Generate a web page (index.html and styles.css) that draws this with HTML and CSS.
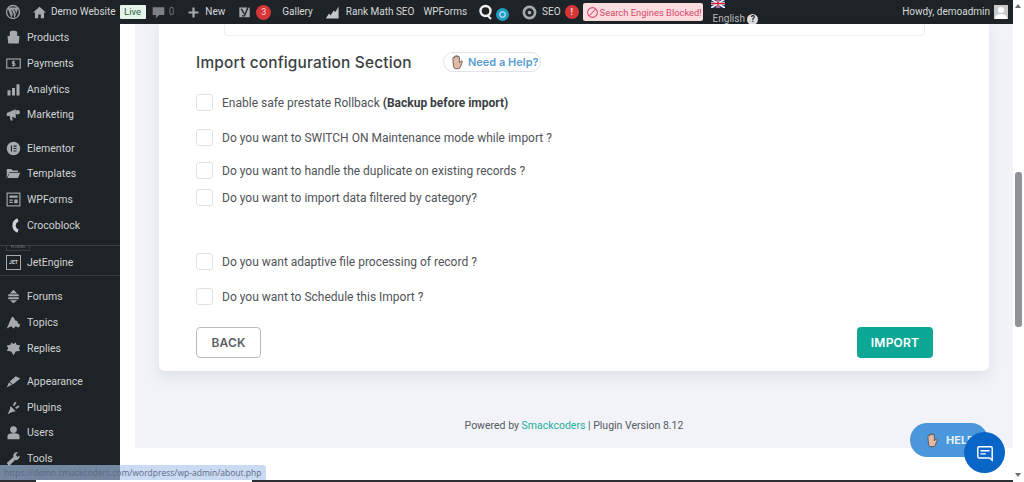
FILE: index.html
```html
<!DOCTYPE html>
<html lang="en">
<head>
  <meta charset="UTF-8" />
  <title>Import configuration</title>
  <link rel="stylesheet" href="styles.css">
</head>
<body>
  <div class="page">
    <header class="adminbar">
      <svg class="bar-icon wp" viewBox="0 0 20 20"><circle cx="10" cy="10" r="9" fill="#9b9ea1"/><circle cx="10" cy="10" r="7.300" fill="#1d2327"/><path d="M3.500 4.500h13c.5 2-1 3-1.500 5l-3 8-2-5.500-2 5.500-3-8c-1-2-1.500-3-1.500-5z" fill="#9b9ea1"/><path d="M8.300 7.500 10.800 14M11.500 6.500 14 13" stroke="#1d2327" stroke-width="1"/></svg>
      <svg class="bar-icon home" viewBox="0 0 20 20"><path d="M10 1 0 10h3v9h5v-6h4v6h5v-9h3z" fill="#a7aaad"/></svg>
      <span class="bar-text site">Demo Website</span>
      <span class="live">Live</span>
      <svg class="bar-icon comment" viewBox="0 0 20 20"><path d="M1 2h18v12h-8l-5 5v-5H1z" fill="#7d8185"/></svg>
      <span class="bar-text muted count">0</span>
      <svg class="bar-icon plus" viewBox="0 0 20 20"><path d="M8 1h4v7h7v4h-7v7H8v-7H1V8h7z" fill="#a7aaad"/></svg>
      <span class="bar-text new">New</span>
      <svg class="bar-icon yoast" viewBox="0 0 20 20"><path d="M2 3h16v15H2z" fill="#a7aaad"/><path d="M5 5l4.500 8M16 1l-6 15H6" fill="none" stroke="#1d2327" stroke-width="2.200"/></svg>
      <span class="badge">3</span>
      <span class="bar-text gallery">Gallery</span>
      <svg class="bar-icon rank" viewBox="0 0 20 20"><path d="M1 18l4-6 2 2 4-6 2 2 4-7v15z" fill="#c3c4c7"/></svg>
      <span class="bar-text rankmath">Rank Math SEO</span>
      <span class="bar-text wpforms">WPForms</span>
      <svg class="bar-icon quiz" viewBox="0 0 14 16"><circle cx="6.500" cy="7" r="5" fill="none" stroke="#f0f0f1" stroke-width="2.400"/><path d="M8 11l4 4" stroke="#f0f0f1" stroke-width="2"/></svg>
      <span class="gear-dot"></span>
      <svg class="bar-icon seo" viewBox="0 0 20 20"><circle cx="10" cy="10" r="7.500" fill="none" stroke="#a7aaad" stroke-width="3.500"/><circle cx="10" cy="10" r="2.500" fill="#a7aaad"/></svg>
      <span class="bar-text seo-text">SEO</span>
      <span class="badge alert">!</span>
      <span class="blocked">
        <svg viewBox="0 0 20 20"><circle cx="10" cy="10" r="7.500" fill="none" stroke="#e0476c" stroke-width="1.600"/><path d="M5 15 15 5" stroke="#e0476c" stroke-width="1.600"/></svg>
        Search Engines Blocked!
      </span>
      <span class="lang">
        <svg class="flag" viewBox="0 0 14 9"><rect width="14" height="9" fill="#2b3f86"/><path d="M0 0l14 9M14 0 0 9" stroke="#fff" stroke-width="1.500"/><path d="M7 0v9M0 4.500h14" stroke="#fff" stroke-width="2.600"/><path d="M7 0v9M0 4.500h14" stroke="#cf2233" stroke-width="1.400"/></svg>
        <span class="lang-row">English <i class="q">?</i></span>
      </span>
      <span class="bar-text howdy">Howdy, demoadmin</span>
      <span class="avatar"><svg viewBox="0 0 14 14"><circle cx="7" cy="5" r="3" fill="#fff"/><path d="M1 14c0-4 3-5 6-5s6 1 6 5z" fill="#fff"/></svg></span>
    </header>

    <div class="layout">
      <nav class="sidebar">
        <ul class="menu">
          <li><svg viewBox="0 0 20 20"><path d="M2 8h16l-1 10H3zM5 8V4a3 3 0 0 1 3-3h4a3 3 0 0 1 3 3v4z" fill="#a7aaad"/></svg>Products</li>
          <li><svg viewBox="0 0 20 20"><rect x="1" y="4" width="18" height="12" fill="none" stroke="#a7aaad" stroke-width="1.500"/><path d="M12 7.500H8.500v2.500H12v2.500H8M10 6v8" fill="none" stroke="#a7aaad" stroke-width="1.300"/></svg>Payments</li>
          <li><svg viewBox="0 0 20 20"><path d="M2 11h4v7H2zM8 8h4v10H8zM14 3h4v15h-4z" fill="#a7aaad"/></svg>Analytics</li>
          <li><svg viewBox="0 0 20 20"><path d="M1 8l12-5v12L8 13l1 5H6l-1-6H1z" fill="#a7aaad"/><circle cx="15.500" cy="7" r="3" fill="#a7aaad"/></svg>Marketing</li>
        </ul>
        <ul class="menu">
          <li><svg viewBox="0 0 20 20"><circle cx="10" cy="10" r="9" fill="#a7aaad"/><path d="M6.500 6v8H8V6zM10 6h4v1.500h-4zM10 9.300h4v1.500h-4zM10 12.500h4V14h-4z" fill="#1d2327"/></svg>Elementor</li>
          <li><svg viewBox="0 0 20 20"><path d="M1 4h6l2 2h7v2H5l-4 8zM5 9h14l-3 7H2z" fill="#a7aaad"/></svg>Templates</li>
          <li><svg viewBox="0 0 20 20"><rect x="1.500" y="1.500" width="17" height="17" fill="none" stroke="#a7aaad" stroke-width="1.500"/><path d="M4.500 4.500h11v3h-11zM4.500 10h4.500v1.500H4.500zM4.500 13h4.500v1.500H4.500zM11 10h4.500v5H11z" fill="#a7aaad"/></svg>WPForms</li>
          <li><svg viewBox="0 0 20 20"><path d="M16 2.500a8 8 0 0 0 0 15" fill="none" stroke="#d0d2d3" stroke-width="4.500"/></svg>Crocoblock</li>
        </ul>
        <div class="plugin-rule"><span>PLUGINS</span></div>
        <ul class="menu">
          <li class="jet"><span class="jet-box">JET</span>JetEngine</li>
        </ul>
        <ul class="menu rule-top">
          <li><svg viewBox="0 0 20 20"><path d="M10 1l5 5H5zM3 7h14v2.500H3zM3 11h14v2.500H3zM5 15h10l-5 4z" fill="#a7aaad"/></svg>Forums</li>
          <li><svg viewBox="0 0 20 20"><path d="M1 18 8 2l3 2 1 3 3 1 1 3 3 2-2 4-4-2-3 3-3-3z" fill="#a7aaad"/></svg>Topics</li>
          <li><svg viewBox="0 0 20 20"><path d="M7 2l3 2 3-2 1 3 5 1-2 4 2 3-6 1-3 5-3-5-6-1 2-3-2-4 5-1z" fill="#a7aaad"/></svg>Replies</li>
        </ul>
        <ul class="menu">
          <li><svg viewBox="0 0 20 20"><path d="M1 18l3-7 4 3zM5 10l8-7 6 3-10 8z" fill="#a7aaad"/></svg>Appearance</li>
          <li><svg viewBox="0 0 20 20"><path d="M2 19l3-6 1-5 7 7-5 1zM9 7l3-5 2 2-3 4zM12 10l5-3 1 2-4 3z" fill="#a7aaad"/></svg>Plugins</li>
          <li><svg viewBox="0 0 20 20"><circle cx="10" cy="6" r="4.500" fill="#a7aaad"/><path d="M2 19v-4c0-3 3-4 8-4s8 1 8 4v4z" fill="#a7aaad"/></svg>Users</li>
          <li><svg viewBox="0 0 20 20"><path d="M1 16l9-8c-1-4 2-7 6-6l-3 3 2 3 3-2c1 4-3 7-6 6l-8 8z" fill="#a7aaad"/></svg>Tools</li>
        </ul>
      </nav>

      <main class="content">
        <div class="panel">
          <section class="card">
            <div class="card-tail"></div>
            <div class="section-head">
              <h2>Import configuration Section</h2>
              <a class="need-help"><svg class="hand" viewBox="0 0 20 20"><path d="M5 9V5a1 1 0 0 1 2 0V3.500a1 1 0 0 1 2 0V3a1 1 0 0 1 2 0v1a1 1 0 0 1 2 0v7l2-2c1-1 2 0 1.500 1L14 17c-1 2-7 2-8 0z" fill="#e3b9a4" stroke="#4d4a4a" stroke-width="1"/></svg>Need a Help?</a>
            </div>
            <label class="opt first"><span class="check"></span>Enable safe prestate Rollback&nbsp;<b>(Backup before import)</b></label>
            <label class="opt second"><span class="check"></span>Do you want to SWITCH ON Maintenance mode while import ?</label>
            <label class="opt third"><span class="check"></span>Do you want to handle the duplicate on existing records ?</label>
            <label class="opt fourth"><span class="check"></span>Do you want to import data filtered by category?</label>
            <label class="opt fifth"><span class="check"></span>Do you want adaptive file processing of record ?</label>
            <label class="opt sixth"><span class="check"></span>Do you want to Schedule this Import ?</label>
            <div class="actions">
              <button class="btn back">BACK</button>
              <button class="btn import">IMPORT</button>
            </div>
          </section>
          <p class="powered">Powered by <a>Smackcoders</a> | Plugin Version 8.12</p>
        </div>
      </main>
    </div>
    <div class="bottom-line"><span></span></div>
  </div>

  <div class="scrollbar">
    <span class="arrow up"></span>
    <span class="thumb"></span>
    <span class="arrow down"></span>
  </div>

  <a class="help-pill"><svg class="hand" viewBox="0 0 20 20"><path d="M5 9V5a1 1 0 0 1 2 0V3.500a1 1 0 0 1 2 0V3a1 1 0 0 1 2 0v1a1 1 0 0 1 2 0v7l2-2c1-1 2 0 1.500 1L14 17c-1 2-7 2-8 0z" fill="#e3b9a4" stroke="#4d4a4a" stroke-width="1"/></svg>HELP</a>
  <a class="chat"><svg viewBox="0 0 20 20"><path d="M3.500 3h13a1.500 1.500 0 0 1 1.500 1.500V18l-3-2.500H3.500A1.500 1.500 0 0 1 2 14V4.500A1.500 1.500 0 0 1 3.500 3z" fill="none" stroke="#fff" stroke-width="1.600"/><path d="M5 7.500h10M5 11h6" stroke="#fff" stroke-width="1.600"/></svg></a>
  <div class="status-url">https://demo.smackcoders.com/wordpress/wp-admin/about.php</div>
</body>
</html>
```

FILE: styles.css
```css
* {
  box-sizing: border-box;
  margin: 0;
  padding: 0;
}

html, body {
  height: 482px;
  overflow: hidden;
}

body {
  display: flex;
  position: relative;
  background: #fff;
  font-family: 'Roboto', sans-serif;
}

.page {
  flex: 1;
  min-width: 0;
  display: flex;
  flex-direction: column;
}

.bottom-line {
  height: 2px;
  flex: none;
  background: #2c3035;
}

.bottom-line span {
  display: block;
  width: 216px;
  height: 2px;
  margin-left: 36px;
  background: #fff;
}

/* top bar */
.adminbar {
  height: 24px;
  flex: 0 0 24px;
  display: flex;
  align-items: center;
  background: #1d2327;
  color: #d7d8d9;
  font-family: 'Roboto', sans-serif;
  font-size: 10px;
  white-space: nowrap;
}

.bar-text { line-height: 24px; }
.muted { color: #6f7478; }

.bar-icon {
  width: 16px;
  height: 16px;
  flex: none;
}

.wp { margin-left: 5px; }
.home { margin-left: 12px; width: 13px; height: 13px; }
.site { margin-left: 5px; }

.live {
  margin-left: 4px;
  width: 26px;
  height: 14px;
  background: #e6f3e8;
  color: #27613b;
  font-size: 9.500px;
  line-height: 14px;
  text-align: center;
  border-radius: 1px;
}

.comment { margin-left: 6px; width: 13px; height: 13px; }
.count { margin-left: 4px; }
.plus { margin-left: 14px; width: 11px; height: 11px; }
.new { margin-left: 6px; }
.yoast { margin-left: 13px; width: 13px; height: 14px; }

.badge {
  margin-left: 5px;
  width: 15px;
  height: 15px;
  border-radius: 50%;
  background: #d63638;
  color: #f3d6d6;
  font-size: 9px;
  line-height: 15px;
  text-align: center;
}

.gallery { margin-left: 11px; }
.rank { margin-left: 12px; width: 16px; height: 16px; }
.rankmath { margin-left: 5px; }
.wpforms { margin-left: 9px; }
.quiz { margin-left: 12px; width: 14px; height: 16px; }

.gear-dot {
  width: 13px;
  height: 13px;
  margin: 4px 0 0 3px;
  border-radius: 50%;
  background: #1f9cc0;
  border: 3px solid #1f9cc0;
  box-shadow: inset 0 0 0 1.500px #a9dbe9;
}

.seo { margin-left: 13px; width: 15px; height: 15px; }
.seo-text { margin-left: 5px; }
.alert { margin-left: 4px; width: 14px; height: 14px; line-height: 14px; font-weight: 700; }

.blocked {
  display: flex;
  align-items: center;
  gap: 1px;
  margin-left: 4px;
  width: 120px;
  height: 18px;
  padding-left: 3px;
  background: #fbdde0;
  color: #d9466a;
  border-radius: 2px;
  font-size: 9.400px;
}

.blocked svg { width: 13px; height: 13px; flex: none; }

.lang {
  display: flex;
  flex-direction: column;
  align-self: stretch;
  margin-left: 8px;
  overflow: hidden;
  color: #b9babb;
}

.flag {
  display: block;
  flex: none;
  width: 14px;
  height: 9px;
  margin-top: -1px;
}

.lang-row {
  flex: none;
  margin-top: 4px;
  margin-left: 2px;
  line-height: 13px;
}

.q {
  display: inline-block;
  width: 11px;
  height: 11px;
  border-radius: 50%;
  background: #dcdcde;
  color: #1d2327;
  font-size: 8.500px;
  font-style: normal;
  font-weight: 700;
  line-height: 11px;
  text-align: center;
}

.howdy { margin-left: auto; }

.avatar {
  width: 14px;
  height: 14px;
  margin: 0 5px 0 4px;
  background: #c9c9ca;
}

.avatar svg { display: block; }

/* sidebar */
.layout {
  flex: 1;
  min-height: 0;
  display: flex;
}

.sidebar {
  width: 120px;
  flex: none;
  padding-top: 1px;
  background: #1d2327;
  color: #d0d2d3;
  font-family: 'Roboto', sans-serif;
  font-size: 10.500px;
}

.menu {
  list-style: none;
  margin-bottom: 7.500px;
}

.menu li {
  height: 25.700px;
  display: flex;
  align-items: center;
  gap: 6px;
  padding-left: 6px;
}

.menu li svg {
  width: 15px;
  height: 15px;
  flex: none;
}

.plugin-rule {
  height: 1px;
  margin-top: -1px;
  background: #3a3f44;
}

.plugin-rule span {
  display: block;
  width: 24px;
  margin-left: 6px;
  border: 1px solid #3a3f44;
  border-top: 0;
  color: #7c8084;
  font-size: 3.500px;
  line-height: 5px;
  text-align: center;
}

.menu li.jet { height: 25px; margin-top: 4px; }

.jet-box {
  width: 15px;
  height: 15px;
  border: 1px solid #a7aaad;
  font-size: 5px;
  font-weight: 700;
  line-height: 13px;
  text-align: center;
  flex: none;
}

.rule-top {
  border-top: 1px solid #33383d;
  margin-top: -7px;
  padding-top: 8px;
}

/* main area */
.content {
  flex: 1;
  min-width: 0;
  padding-left: 15px;
  display: flex;
  flex-direction: column;
  background: #fff;
}

.panel {
  height: 424px;
  padding: 0 24px;
  background: #f1f3f8;
}

.card {
  height: 347px;
  padding: 0 56px 0 37px;
  background: #fff;
  border-radius: 0 0 6px 6px;
  box-shadow: 0 6px 14px rgba(60, 70, 90, 0.10);
}

.card-tail {
  height: 12px;
  margin: 0 8px 0 28px;
  border: 1px solid #eceef1;
  border-top: 0;
  border-radius: 0 0 4px 4px;
}

.section-head {
  display: flex;
  align-items: center;
  height: 24px;
  margin-top: 14px;
}

.section-head h2 {
  width: 247px;
  color: #3b3f44;
  font-family: 'Inter', sans-serif;
  font-size: 15.400px;
  font-weight: 500;
  letter-spacing: 0.2px;
  white-space: nowrap;
}

.need-help {
  display: flex;
  align-items: center;
  gap: 3px;
  width: 98px;
  height: 20px;
  padding-left: 5px;
  border: 1px solid #dfe3e8;
  border-radius: 10px;
  color: #5b9dd2;
  font-family: 'Inter', sans-serif;
  font-size: 11px;
  font-weight: 600;
  white-space: nowrap;
}

.hand { width: 16px; height: 16px; flex: none; }

.opt {
  display: flex;
  align-items: center;
  height: 18px;
  color: #4f5358;
  font-size: 12px;
  white-space: nowrap;
}

.opt b { color: #3b3f44; font-weight: 700; }

.first { margin-top: 19.500px; }
.second { margin-top: 17px; }
.third { margin-top: 15px; }
.fourth { margin-top: 9px; }
.fifth { margin-top: 46px; }
.sixth { margin-top: 17px; }

.check {
  width: 17px;
  height: 17px;
  margin-right: 9px;
  border: 1px solid #dfe1e4;
  border-radius: 3px;
  background: #fff;
  flex: none;
}

.actions {
  display: flex;
  justify-content: space-between;
  margin-top: 21.500px;
}

.btn {
  height: 31px;
  border-radius: 4px;
  font-family: 'Inter', sans-serif;
  font-size: 12px;
  font-weight: 600;
  letter-spacing: 0.2px;
}

.back {
  width: 65px;
  background: #fff;
  color: #5b5f63;
  border: 1px solid #b9bdc2;
}

.import {
  width: 76px;
  background: #0ca895;
  color: #fff;
  border: none;
}

.powered {
  margin-top: 47.500px;
  color: #55595e;
  font-size: 10.500px;
  line-height: 14px;
  text-align: center;
}

.powered a { color: #1fae9c; }

/* scrollbar */
.scrollbar {
  position: relative;
  width: 11px;
  flex: none;
  background: #fff;
}

.thumb {
  position: absolute;
  top: 172px;
  left: 2px;
  width: 7px;
  height: 155px;
  border-radius: 3px;
  background: #8f9296;
}

.arrow {
  position: absolute;
  left: 2px;
  border-left: 3.500px solid transparent;
  border-right: 3.500px solid transparent;
}

.up { top: 4px; border-bottom: 4px solid #6b6e72; }
.down { bottom: 5px; border-top: 4px solid #6b6e72; }

/* floating things */
.help-pill {
  position: absolute;
  left: 910px;
  top: 423px;
  width: 78px;
  height: 34px;
  display: flex;
  align-items: center;
  gap: 6px;
  padding-left: 14px;
  border-radius: 17px;
  background: #4a98db;
  color: #e6f1fb;
  font-family: 'Inter', sans-serif;
  font-size: 11px;
  font-weight: 700;
}

.chat {
  position: absolute;
  left: 964px;
  top: 432px;
  width: 41px;
  height: 41px;
  display: flex;
  align-items: center;
  justify-content: center;
  border-radius: 50%;
  background: #0a66c6;
}

.chat svg { width: 18px; height: 18px; }

.status-url {
  position: absolute;
  left: 0;
  top: 465px;
  width: 266px;
  height: 15px;
  padding-left: 4px;
  background: rgba(170, 195, 235, 0.62);
  border-radius: 0 3px 0 0;
  color: #5c6a80;
  font-family: 'Open Sans', sans-serif;
  font-size: 8.500px;
  line-height: 15px;
  white-space: nowrap;
}
```
